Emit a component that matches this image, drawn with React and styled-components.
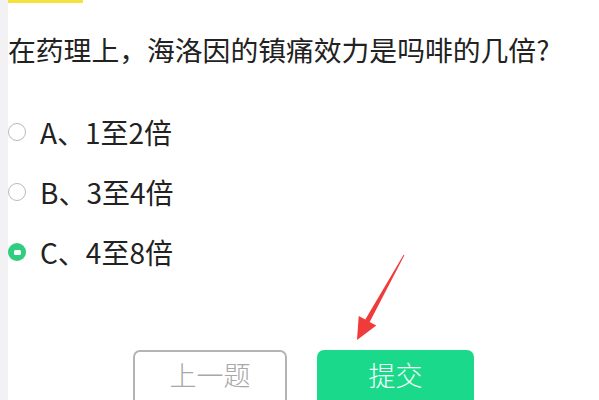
import React, { useState } from 'react';
import styled, { createGlobalStyle } from 'styled-components';

const GlobalStyle = createGlobalStyle`
	html, body {
		margin: 0;
		padding: 0;
		background: #ffffff;
	}
	body {
		font-family: 'Noto Sans CJK SC', 'Noto Sans', sans-serif;
		overflow: hidden;
	}
`;

const Page = styled.div`
	position: relative;
	display: flex;
	width: 599px;
	height: 400px;
	overflow: hidden;
	background: #ffffff;
`;

const SideStrip = styled.div`
	width: 8px;
	flex-shrink: 0;
	background: #f2f2f4;
`;

const Main = styled.div`
	flex: 1;
	display: flex;
	flex-direction: column;
`;

const Accent = styled.div`
	width: 75px;
	height: 3px;
	background: #f6e23c;
`;

const Question = styled.h1`
	margin: 0;
	padding-top: 26px;
	font-size: 27.8px;
	line-height: 40px;
	font-weight: 400;
	color: #222222;
	white-space: nowrap;
`;

const Options = styled.div`
	display: flex;
	flex-direction: column;
	gap: 24px;
	margin-top: 45px;
`;

const Option = styled.label`
	display: flex;
	align-items: center;
	height: 36px;
	cursor: pointer;
`;

const Radio = styled.span`
	width: 18px;
	height: 18px;
	box-sizing: border-box;
	border-radius: 50%;
	flex-shrink: 0;
	display: flex;
	align-items: center;
	justify-content: center;
	border: ${(p) => (p.checked ? 'none' : '1.5px solid #bababa')};
	background: ${(p) => (p.checked ? '#2fce7f' : '#ffffff')};

	&::after {
		content: '';
		display: ${(p) => (p.checked ? 'block' : 'none')};
		width: 7px;
		height: 5px;
		border-radius: 1.5px;
		background: #ffffff;
	}
`;

const OptionText = styled.span`
	margin-left: 14px;
	font-size: 28px;
	color: #222222;
`;

const Buttons = styled.div`
	display: flex;
	justify-content: center;
	gap: 30px;
	margin-top: auto;
	margin-bottom: -10px;
`;

const Button = styled.button`
	width: ${(p) => (p.primary ? '157px' : '154px')};
	height: 60px;
	box-sizing: border-box;
	border-radius: 7px;
	font-family: 'Noto Sans CJK SC', sans-serif;
	font-size: 27px;
	font-weight: 300;
	padding: 0 0 12px;
	cursor: pointer;
	border: ${(p) => (p.primary ? 'none' : '2px solid #b4b4b4')};
	background: ${(p) => (p.primary ? '#1ad98b' : '#ffffff')};
	color: ${(p) => (p.primary ? '#f4fff9' : '#a8a8a8')};
`;

const Arrow = styled.svg`
	position: absolute;
	left: 0;
	top: 0;
	pointer-events: none;
`;

const options = [
	{ key: 'A', text: 'A、1至2倍' },
	{ key: 'B', text: 'B、3至4倍' },
	{ key: 'C', text: 'C、4至8倍' },
];

const App = () => {
	const [picked, setPicked] = useState('C');

	return (
		<Page>
			<GlobalStyle />
			<SideStrip />
			<Main>
				<Accent />
				<Question>在药理上，海洛因的镇痛效力是吗啡的几倍?</Question>
				<Options>
					{options.map((o) => (
						<Option key={o.key} onClick={() => setPicked(o.key)}>
							<Radio checked={picked === o.key} />
							<OptionText>{o.text}</OptionText>
						</Option>
					))}
				</Options>
				<Buttons>
					<Button>上一题</Button>
					<Button primary>提交</Button>
				</Buttons>
			</Main>
			<Arrow width="599" height="400" viewBox="0 0 599 400">
				<polygon
					points="357,340 358.7,315.9 365.3,319.5 403.6,254.8 404.4,255.2 369.7,321.9 376.3,325.5"
					fill="#f03b3b"
				/>
			</Arrow>
		</Page>
	);
};

export default App;
